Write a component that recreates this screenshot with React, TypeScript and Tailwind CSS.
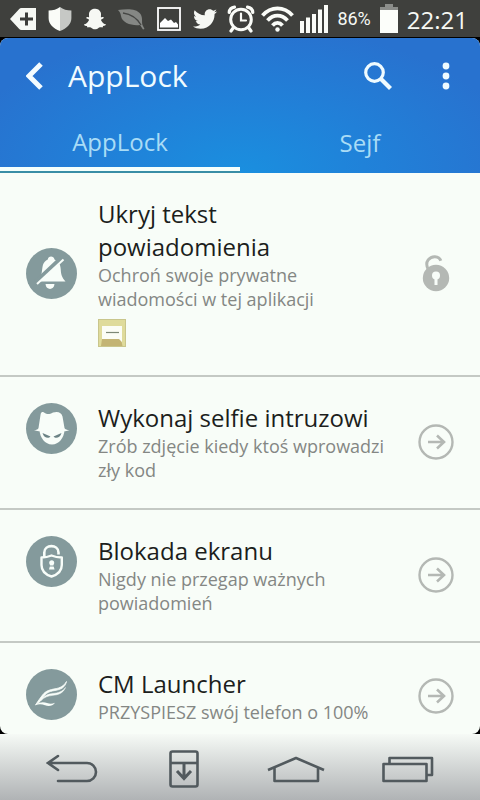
import type { ReactNode } from 'react'
import { FaSnapchatGhost, FaTwitter } from 'react-icons/fa'

type FeatureItem = {
  id: string
  title: string
  description: string
  icon: ReactNode
  locked?: boolean
}

function DeleteTagIcon() {
  return (
    <svg width="26" height="22" viewBox="0 0 26 22">
      <path d="M0 11 9 1.2Q10 0 11.5 0H26V22H11.5Q10 22 9 20.800Z" fill="#f6f8f4" />
      <path d="M10 11h13M16.500 4.500v13" stroke="#3c3d3a" strokeWidth="3" />
    </svg>
  )
}

function ShieldIcon() {
  return (
    <svg width="24" height="24" viewBox="0 0 24 24">
      <path d="M12 0C9 2.500 5 3.500 .6 3.500V11C.6 17 5 21.500 12 24Z" fill="#fafcf8" />
      <path d="M12 0c3 2.500 7 3.500 11.400 3.500V11C23.400 17 19 21.500 12 24Z" fill="#c6c8c5" />
    </svg>
  )
}

function LeafIcon() {
  return (
    <svg width="27" height="22" viewBox="0 0 27 22">
      <path d="M0 2C8 1 18 0 22.500 6C25 10 23.500 13.500 24.500 17L26.500 21L25 21.500L22 17C14 18 4 15 3 8C2.600 5 1.500 3.500 0 2Z" fill="#858784" />
      <path d="M5 5C12 6 19 10 23 17" fill="none" stroke="#454644" strokeWidth="1.300" />
    </svg>
  )
}

function PictureIcon() {
  return (
    <svg width="24" height="24" viewBox="0 0 24 24">
      <rect x="1" y="1" width="22" height="22" fill="none" stroke="#fff" strokeWidth="1.800" />
      <path d="M3 20.500V16L8 11L11 14L14 12.500L17 16L19 15L21 17.500V20.500Z" fill="#fff" />
    </svg>
  )
}

function AlarmIcon() {
  return (
    <svg width="28" height="28" viewBox="0 0 28 28" fill="none" stroke="#fafcf8" strokeLinecap="round">
      <circle cx="14" cy="14.500" r="10.300" strokeWidth="3" />
      <path d="M14 8.500V15.500H19" strokeWidth="2.200" />
      <path d="M2.200 7.500A6 6 0 0 1 7.500 2.200M20.500 2.200A6 6 0 0 1 25.800 7.500" strokeWidth="3.200" />
      <path d="M6.500 22.500 4 26M21.500 22.500 24 26" strokeWidth="3.200" />
    </svg>
  )
}

function WifiIcon() {
  return (
    <svg width="33" height="26" viewBox="0 0 33 26" fill="none" stroke="#fafcf8" strokeWidth="3.800">
      <path d="M1.500 9.500C10 0 23 0 31.500 9.500" />
      <path d="M6.500 14.500C12.500 8 20.500 8 26.500 14.500" />
      <path d="M11.500 19.500C14.500 16 18.500 16 21.500 19.500" />
      <circle cx="16.500" cy="23.500" r="2.200" fill="#fafcf8" stroke="none" />
    </svg>
  )
}

function SignalIcon() {
  return (
    <svg width="29" height="28" viewBox="0 0 29 28" fill="#fafcf8">
      <rect x="0" y="16" width="4" height="12" />
      <rect x="6" y="12.500" width="4" height="15.500" />
      <rect x="12" y="9" width="4" height="19" />
      <rect x="18" y="4.500" width="4" height="23.500" />
      <rect x="24" y="0" width="4" height="28" />
    </svg>
  )
}

function BatteryIcon() {
  return (
    <svg width="18" height="29" viewBox="0 0 18 29">
      <path d="M5 0H13V3H18V7H0V3H5Z" fill="#8b8d8a" />
      <rect y="6" width="18" height="23" fill="#fcfefa" />
    </svg>
  )
}

function StatusBar() {
  return (
    <div className="flex h-[38px] shrink-0 items-center justify-between border-b border-black bg-[#3f403d] pr-3 pl-[10px] text-[#f6f8f4]">
      <div className="flex items-center gap-3">
        <DeleteTagIcon />
        <ShieldIcon />
        <FaSnapchatGhost size={22} />
        <LeafIcon />
        <PictureIcon />
        <FaTwitter size={24} />
      </div>
      <div className="flex items-center gap-[6px]">
        <AlarmIcon />
        <WifiIcon />
        <SignalIcon />
        <span className="pl-[2px] font-['Roboto'] text-lg">86%</span>
        <span className="px-[3px]">
          <BatteryIcon />
        </span>
        <span className="pt-[2px] font-['Open_Sans'] text-2xl">22:21</span>
      </div>
    </div>
  )
}

function Header() {
  return (
    <header className="shrink-0 bg-[radial-gradient(ellipse_60%_110%_at_50%_100%,#1a8fdf_0%,#2180d8_50%,#2872cf_100%)] text-white">
      <div className="flex h-[75px] items-center pr-6 pl-[26px]">
        <button aria-label="Wstecz">
          <svg width="18" height="28" viewBox="0 0 18 28" fill="none" stroke="#f4fcff" strokeWidth="5">
            <path d="M15 2 3 14 15 26" />
          </svg>
        </button>
        <h1 className="ml-6 flex-1 text-[30px] text-[#f0fbff]">AppLock</h1>
        <button aria-label="Szukaj">
          <svg width="28" height="28" viewBox="0 0 28 28" fill="none" stroke="#effbff">
            <circle cx="10.500" cy="10.500" r="8.800" strokeWidth="3.200" />
            <path d="M17 17 26.500 26.500" strokeWidth="4.200" />
          </svg>
        </button>
        <button aria-label="Więcej opcji" className="ml-11">
          <svg width="20" height="28" viewBox="0 0 20 28" fill="#effbff">
            <circle cx="10" cy="4" r="3.400" />
            <circle cx="10" cy="14" r="3.400" />
            <circle cx="10" cy="24" r="3.400" />
          </svg>
        </button>
      </div>
      <nav className="grid h-[60px] grid-cols-2 text-2xl text-[#a9dcf6]">
        <button className="border-b-2 border-[#3a8ea6]">
          <span className="flex h-[58px] items-center justify-center border-b-4 border-[#f4fffc] pt-1">AppLock</span>
        </button>
        <button>Sejf</button>
      </nav>
    </header>
  )
}

function BellOffIcon() {
  return (
    <svg width="51" height="51" viewBox="0 0 51 51" className="shrink-0">
      <circle cx="25.500" cy="25.500" r="25.500" fill="#849a9c" />
      <g fill="#f8fdf9">
        <path d="M12 33.500C16 29 15.500 25 16.500 19C17.300 14.500 19.500 12.500 21.800 11.500C22 7.500 28 7.500 28.500 11.500C32 13 34.500 16 34.700 21C35 27 36 29.500 39.500 33.500Z" />
        <path d="M19.500 36H28.500C28 42.500 20 42.500 19.500 36Z" />
      </g>
      <path d="M9.500 34.500 35.500 10" stroke="#849a9c" strokeWidth="4.500" />
      <path d="M11 36 37.500 11.500" stroke="#f8fdf9" strokeWidth="2" />
    </svg>
  )
}

function SpyIcon() {
  return (
    <svg width="51" height="51" viewBox="0 0 51 51" className="shrink-0">
      <circle cx="25.500" cy="25.500" r="25.500" fill="#849a9c" />
      <g fill="#f8fdf9">
        <path d="M13.500 27C14 35 19 41.500 26 41.500S38 35 38.500 27Z" />
        <path d="M8 27C10.500 27 12 26.500 12.500 25L14.500 12C15 9 16 8.500 18 9.500C21.500 11.500 23 11.500 27 9.500C32 8 35.500 9.500 36.500 13.500L38.500 25C39 26.500 41 27 43.500 27C40 29 34 28.500 26 28.500S12 29 8 27Z" />
      </g>
      <path d="M16.500 30 24.500 33.500C22.500 36 18 35 16.500 30ZM35.500 30 27.500 33.500C29.500 36 34 35 35.500 30Z" fill="#6c8386" />
    </svg>
  )
}

function ShieldLockIcon() {
  return (
    <svg width="51" height="51" viewBox="0 0 51 51" className="shrink-0">
      <circle cx="25.500" cy="25.500" r="25.500" fill="#849a9c" />
      <g fill="none" stroke="#f8fdf9">
        <path d="M18.300 21V16.500C18.300 8 32.500 8 32.500 16.500V18.500" strokeWidth="2.600" />
        <path d="M25.500 19.500C22 21 19 21.500 15.500 21.500V29C15.500 35 19 38.500 25.500 40.500C32 38.500 35.800 35 35.800 29V21.500C32 21.500 29 21 25.500 19.500Z" strokeWidth="2.400" strokeLinejoin="round" />
      </g>
      <circle cx="25.700" cy="26.800" r="2.500" fill="#f8fdf9" />
      <path d="M25 26H26.500L28.500 33.500H23Z" fill="#f8fdf9" />
      <path d="M22.500 30H29" stroke="#849a9c" strokeWidth="1" />
    </svg>
  )
}

function FeatherIcon() {
  return (
    <svg width="51" height="51" viewBox="0 0 51 51" className="shrink-0">
      <circle cx="25.500" cy="25.500" r="25.500" fill="#849a9c" />
      <path
        d="M40.500 12.500C39 18.500 35 20.500 29 21.500C22 22.500 20 24.500 17 28.500C15 31.500 13 34 9.500 36C11.500 33 14 29 16.500 26C20 21.500 24 20.800 29 19.800C34 19 38 17 40.500 12.500Z"
        fill="#f8fdf9"
        stroke="#f8fdf9"
        strokeWidth=".8"
      />
      <path
        d="M39.500 18.500C37 24.500 32 25.800 27 26.300C22 27 18.500 28 15 31.500C18 26.500 22 25 27 24.500C32 24 37 22.500 39.500 18.500Z"
        fill="#f8fdf9"
        stroke="#f8fdf9"
        strokeWidth=".5"
      />
      <path
        d="M9.500 36C14 32.500 18 33 21 34C24 35 26 35 29 33.800C26.500 37.500 22 37.500 19 36.200C16 35 13 34.800 9.500 36Z"
        fill="#f8fdf9"
      />
    </svg>
  )
}

function MessageAppIcon() {
  return (
    <svg width="28" height="28" viewBox="0 0 28 28" className="mt-2 mb-[2px]">
      <rect x=".5" y=".5" width="27" height="27" fill="#dfdb9b" stroke="#c9c68c" />
      <path d="M4 20H23L24.500 27H3Z" fill="#c3b474" />
      <path d="M4 7H24V23L21 20H4Z" fill="#fbfdf6" />
      <path d="M8 13.500H21" stroke="#7d8876" strokeWidth="1.200" />
    </svg>
  )
}

function OpenLockIcon() {
  return (
    <svg width="36" height="38" viewBox="0 0 36 38">
      <path d="M10.500 16C5.500 7 12.500 2.500 17 2.700C20 2.800 22 4.300 22.800 6.800" fill="none" stroke="#b4b8b4" strokeWidth="3" />
      <circle cx="18" cy="24" r="13.200" fill="#b4b8b4" />
      <circle cx="18" cy="21.500" r="4" fill="#f8fdf9" />
      <rect x="16.500" y="22" width="3" height="9" fill="#f8fdf9" />
    </svg>
  )
}

function ArrowCircleIcon() {
  return (
    <svg width="36" height="36" viewBox="0 0 36 36" fill="none" stroke="#b4b8b4">
      <circle cx="18" cy="18" r="16.500" strokeWidth="2.400" />
      <path d="M10 18H26M19 11.500 26 18 19 24.500" strokeWidth="2.600" />
    </svg>
  )
}

const items: FeatureItem[] = [
  {
    id: 'notifications',
    title: 'Ukryj tekst powiadomienia',
    description: 'Ochroń swoje prywatne wiadomości w tej aplikacji',
    icon: <BellOffIcon />,
    locked: true,
  },
  {
    id: 'selfie',
    title: 'Wykonaj selfie intruzowi',
    description: 'Zrób zdjęcie kiedy ktoś wprowadzi zły kod',
    icon: <SpyIcon />,
  },
  {
    id: 'screen',
    title: 'Blokada ekranu',
    description: 'Nigdy nie przegap ważnych powiadomień',
    icon: <ShieldLockIcon />,
  },
  {
    id: 'launcher',
    title: 'CM Launcher',
    description: 'PRZYSPIESZ swój telefon o 100%',
    icon: <FeatherIcon />,
  },
]

function FeatureRow({ item }: { item: FeatureItem }) {
  return (
    <li className="flex items-center border-b-2 border-[#c4c9c4] px-[26px] pt-6 pb-[26px]">
      <div className={item.locked ? '' : 'self-start pt-[2px]'}>{item.icon}</div>
      <div className="mr-7 ml-[21px] min-w-0 flex-1">
        <h2 className="text-2xl leading-[33px] text-[#1c1e1c]">{item.title}</h2>
        <p className="text-lg leading-6 text-[#848784]">{item.description}</p>
        {item.locked && <MessageAppIcon />}
      </div>
      <button aria-label={item.title}>{item.locked ? <OpenLockIcon /> : <ArrowCircleIcon />}</button>
    </li>
  )
}

function NavigationBar() {
  return (
    <nav className="grid h-[66px] shrink-0 grid-cols-4 place-items-center bg-linear-to-b from-[#f6faf6] to-[#b0b3b5] px-4 pt-1">
      <button aria-label="Cofnij">
        <svg width="52" height="30" viewBox="0 0 52 30" fill="none" stroke="#525a5e" strokeWidth="2.600" strokeLinecap="round">
          <path d="M12 2 2 9 12 16M2 9H41A9 9 0 0 1 41 27H12" />
        </svg>
      </button>
      <button aria-label="Panel powiadomień">
        <svg width="30" height="38" viewBox="0 0 30 38" fill="none" stroke="#525a5e" strokeWidth="2.600">
          <rect x="1.500" y="1.500" width="27" height="35" rx="2" />
          <path d="M1.500 13H28.500" />
          <path d="M15 13V27M8 21 15 28.500 22 21" strokeWidth="3" />
        </svg>
      </button>
      <button aria-label="Ekran główny">
        <svg width="58" height="30" viewBox="0 0 58 30" fill="none" stroke="#525a5e" strokeWidth="2.600" strokeLinejoin="round">
          <path d="M1 16 29 4 57 16M7.500 14V27H51V14" />
        </svg>
      </button>
      <button aria-label="Ostatnie aplikacje">
        <svg width="52" height="30" viewBox="0 0 52 30" fill="none" stroke="#525a5e" strokeWidth="2.600" strokeLinejoin="round">
          <rect x="1.500" y="10" width="43" height="17" />
          <path d="M7.500 10V4H50V21H44.500" />
        </svg>
      </button>
    </nav>
  )
}

export default function App() {
  return (
    <div className="flex h-screen flex-col bg-black font-['Open_Sans','Noto_Sans',sans-serif]">
      <StatusBar />
      <main className="flex min-h-0 flex-1 flex-col overflow-hidden rounded-lg bg-[#f8fdf8]">
        <Header />
        <ul className="min-h-0 flex-1 overflow-hidden">
          {items.map((item) => (
            <FeatureRow key={item.id} item={item} />
          ))}
        </ul>
      </main>
      <NavigationBar />
    </div>
  )
}
